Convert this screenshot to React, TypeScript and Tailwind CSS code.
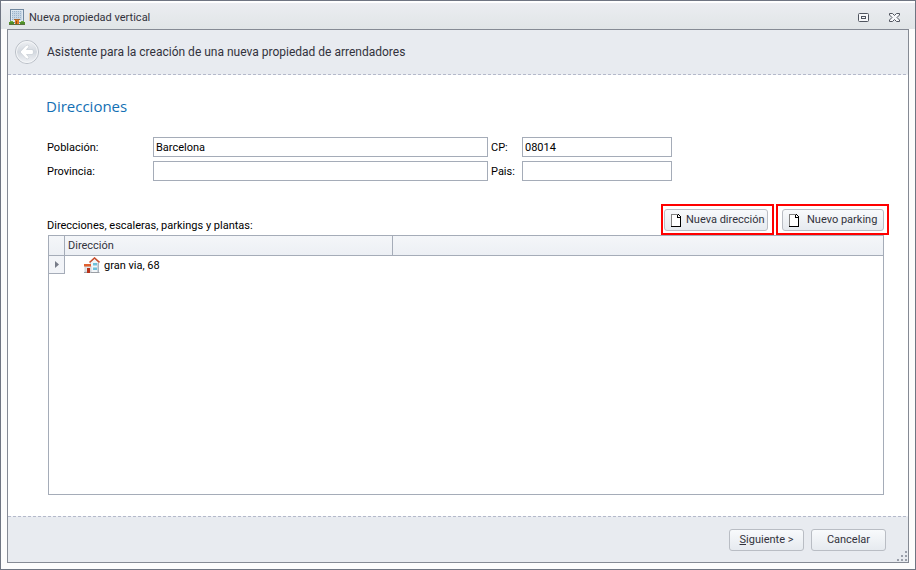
import React from "react";

const fieldClass =
  "h-5 w-full min-w-0 border border-[#a5acb8] bg-white px-[2px] text-[11px] leading-none text-black outline-none";

const buttonClass =
  "flex h-[22px] items-center rounded-[3px] border border-[#b9bdc4] bg-gradient-to-b from-[#f8fafc] to-[#e6eaef] pt-px text-[11px] text-[#32323c] whitespace-nowrap";

const labelClass = "pt-px leading-4";

const dashClass =
  "h-px shrink-0 bg-[repeating-linear-gradient(90deg,#b4b9ca_0_3px,#eef0f5_3px_5px)]";

const BuildingIcon = () => (
  <svg className="h-4 w-4" viewBox="0 0 16 16" shapeRendering="crispEdges">
    <rect x="1" y="0" width="14" height="14" fill="#71889f" />
    <rect x="2" y="1" width="12" height="12" fill="#dfe9f2" />
    <rect x="3" y="2" width="10" height="9" fill="#9db4ca" />
    {[3, 5, 7, 9].map((y) => (
      <rect key={y} x="3" y={y} width="10" height="1" fill="#c8d7e5" />
    ))}
    {[4, 6, 8, 10, 12].map((x) => (
      <rect key={x} x={x} y="2" width="1" height="9" fill="#c8d7e5" />
    ))}
    <rect x="5" y="10" width="6" height="1" fill="#a8662c" />
    <rect x="6" y="11" width="4" height="4" fill="#e07b22" />
    <rect x="7" y="12" width="1" height="3" fill="#8a4a18" />
    <rect x="1" y="12" width="3" height="1" fill="#6fae3a" />
    <rect x="0" y="13" width="5" height="2" fill="#4f8e2a" />
    <rect x="12" y="12" width="3" height="1" fill="#6fae3a" />
    <rect x="11" y="13" width="5" height="2" fill="#4f8e2a" />
    <rect x="0" y="15" width="16" height="1" fill="#5a7040" />
  </svg>
);

const BackIcon = () => (
  <svg className="h-[26px] w-[26px]" viewBox="0 0 26 26">
    <defs>
      <linearGradient id="disc" x1="0" y1="0" x2="0" y2="1">
        <stop offset="0" stopColor="#f0f2f5" />
        <stop offset="0.5" stopColor="#d3d8df" />
        <stop offset="1" stopColor="#f2f4f7" />
      </linearGradient>
    </defs>
    <circle cx="13" cy="13" r="11.5" fill="url(#disc)" stroke="#b9bec6" />
    <circle cx="13" cy="13" r="10.5" fill="none" stroke="#f4f6f8" />
    <path
      d="M6 13 12 6.500q1.500-.8 2.500 0 .8 1-.2 2L12.500 10.500H18q1.500 0 1.500 2.500T18 15.500h-5.500l1.800 2q1 1 .2 2-1 .8-2.500 0z"
      fill="#fff"
      stroke="#c0c6ce"
      strokeWidth="0.6"
      strokeLinejoin="round"
    />
  </svg>
);

const PageIcon = () => (
  <svg className="h-[13px] w-[11px] shrink-0" viewBox="0 0 11 13" shapeRendering="crispEdges">
    <path d="M1 1h6l3 3v8H1z" fill="#fff" />
    <path d="M0 0h7v1H1v11H0z" fill="#808080" />
    <path d="M7 0h1v1h1v1h1v11H0v-1h9V4H6V1h1z" fill="#000" />
    <path d="M7 1h1v1h1v1H7z" fill="#fff" />
  </svg>
);

const HouseIcon = () => (
  <svg className="h-4 w-4 shrink-0" viewBox="0 0 16 16">
    <path d="M6.500 5.500 10.500 1.500l4 4v10h-8z" fill="#f1f5f8" stroke="#b5bec8" strokeWidth="0.6" />
    <path d="M13.500 6H15v9h-1.500z" fill="#a9b3be" />
    <path d="M1 9h6v6H1z" fill="#e4e8ec" stroke="#b5bec8" strokeWidth="0.6" />
    <path d="M5.500 5.500 10.500 1l5 4.500" fill="none" stroke="#c9502f" strokeWidth="1.600" />
    <path d="M0 7h7v2.500H0z" fill="#e0602f" />
    <path d="M3 11h3v5H3z" fill="#b8331a" />
    <path d="M9 6h4v2.500H9zM9 10.500h4V13H9z" fill="#6cc0dc" />
    <path d="M6.500 15h9v1h-9zM0 15h3v1H0z" fill="#9b9fa5" />
  </svg>
);

const App = () => {
  return (
    <div className="flex min-h-screen flex-col border border-[#6f7582] bg-[#fcfcfc] font-['Roboto','Noto_Sans',sans-serif] text-[11px] text-black">
      <header className="flex h-7 shrink-0 items-center border-t-2 border-white bg-gradient-to-b from-[#ebedf1] to-[#e1e5e7] pt-[2px] pr-[15px] pl-2">
        <BuildingIcon />
        <h1 className={`${labelClass} ml-1 flex-1 text-[#32323c]`}>Nueva propiedad vertical</h1>
        <button type="button" aria-label="Maximizar">
          <svg className="h-[9px] w-[11px]" viewBox="0 0 11 9" fill="none" stroke="#50555f">
            <rect x="0.5" y="0.5" width="10" height="8" rx="1" fill="#f7f8fa" />
            <rect x="3.500" y="3.500" width="4" height="2" />
          </svg>
        </button>
        <button type="button" aria-label="Cerrar" className="ml-5">
          <svg className="h-[9px] w-[11px]" viewBox="0 0 11 9">
            <path
              d="M.5.5h3l2 2 2-2h3v1.500L8 4.500l2.500 2.500v1.500h-3l-2-2-2 2h-3V7L3 4.500.5 2z"
              fill="#f7f8fa"
              stroke="#50555f"
            />
          </svg>
        </button>
      </header>

      <div className="mx-[6px] mb-[6px] flex flex-1 flex-col border border-[#858a94] bg-white">
        <div className="flex h-11 shrink-0 items-center bg-[#e8ebf0] pl-[6px]">
          <button type="button" aria-label="Atrás" disabled>
            <BackIcon />
          </button>
          <p className="ml-[7px] text-[12px] text-[#32323c]">
            Asistente para la creación de una nueva propiedad de arrendadores
          </p>
        </div>
        <div className={dashClass} />

        <main className="flex flex-1 flex-col pt-[19px] pr-6 pb-[21px] pl-10">
          <h2 className="-ml-[2px] font-['Open_Sans','Noto_Sans',sans-serif] text-[15px] leading-6 text-[#1470b4]">
            Direcciones
          </h2>

          <form className="mt-[19px] -ml-px grid grid-cols-[106px_minmax(0,335px)_34px_minmax(0,150px)] items-center gap-y-1">
            <label htmlFor="poblacion" className={labelClass}>Población:</label>
            <input id="poblacion" className={fieldClass} defaultValue="Barcelona" />
            <label htmlFor="cp" className={`${labelClass} pl-[3px]`}>CP:</label>
            <input id="cp" className={fieldClass} defaultValue="08014" />
            <label htmlFor="provincia" className={labelClass}>Provincia:</label>
            <input id="provincia" className={fieldClass} />
            <label htmlFor="pais" className={`${labelClass} pl-[3px]`}>Pais:</label>
            <input id="pais" className={fieldClass} />
          </form>

          <div className="-mr-[5px] -ml-px mt-[23px] flex items-end">
            <p id="tree-label" className="flex-1 pb-px leading-4">
              Direcciones, escaleras, parkings y plantas:
            </p>
            <div className="mr-[2px] border-2 border-[#f00] pt-[3px] pr-1 pb-[2px] pl-px">
              <button type="button" className={`${buttonClass} w-[104px] gap-1 pl-[6px]`}>
                <PageIcon />
                Nueva dirección
              </button>
            </div>
            <div className="border-2 border-[#f00] pt-[3px] pr-[3px] pb-[2px] pl-1">
              <button type="button" className={`${buttonClass} w-[102px] gap-[7px] pl-[6px]`}>
                <PageIcon />
                Nuevo parking
              </button>
            </div>
          </div>

          <div className="flex-1 border border-[#a5acb8]">
            <table
              aria-labelledby="tree-label"
              className="w-full table-fixed border-separate border-spacing-0"
            >
              <colgroup>
                <col className="w-4" />
                <col className="w-[328px]" />
                <col />
              </colgroup>
              <thead>
                <tr className="h-5 bg-gradient-to-b from-[#f4f6f9] to-[#eceff4] text-left text-[#32323c]">
                  <th className="border-r border-b border-[#a5acb8] p-0" />
                  <th className="border-r border-b border-[#a5acb8] p-0 pt-px pl-[3px] leading-4 font-normal">
                    Dirección
                  </th>
                  <th className="border-b border-[#a5acb8] p-0" />
                </tr>
              </thead>
              <tbody>
                <tr className="h-[18px]">
                  <td className="border-r border-b border-[#a5acb8] bg-[#f2f4f8] p-0">
                    <svg className="mx-auto h-[7px] w-1" viewBox="0 0 4 7">
                      <path d="M0 0 4 3.500 0 7z" fill="#777c88" />
                    </svg>
                  </td>
                  <td className="p-0 pl-[19px]">
                    <div className="flex items-center gap-1">
                      <HouseIcon />
                      <span className={labelClass}>gran via, 68</span>
                    </div>
                  </td>
                  <td className="p-0" />
                </tr>
              </tbody>
            </table>
          </div>
        </main>

        <div className={dashClass} />
        <footer className="relative flex h-[45px] shrink-0 items-center justify-end gap-[7px] bg-[#e8ebf0] pr-[22px]">
          <button type="button" className={`${buttonClass} w-[75px] justify-center`}>
            <span>
              <u>S</u>iguiente &gt;
            </span>
          </button>
          <button type="button" className={`${buttonClass} w-[75px] justify-center`}>
            Cancelar
          </button>
          <svg className="absolute right-px bottom-px h-[10px] w-[10px]" viewBox="0 0 10 10" fill="#9a9faa">
            <path d="M8 0h2v2H8zM4 4h2v2H4zM8 4h2v2H8zM0 8h2v2H0zM4 8h2v2H4zM8 8h2v2H8z" />
          </svg>
        </footer>
      </div>
    </div>
  );
};

export default App;
